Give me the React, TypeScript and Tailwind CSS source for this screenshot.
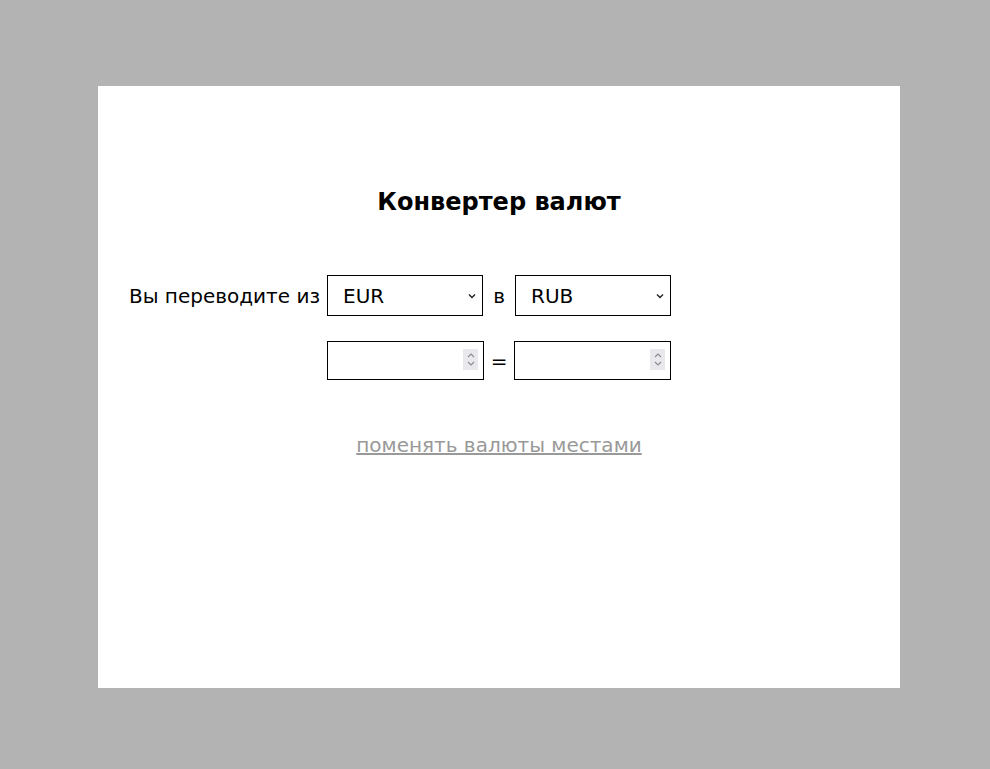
import React, { useState } from 'react';

const currencies = ['EUR', 'RUB', 'USD', 'GBP', 'CNY'];

const Chevron: React.FC = () => (
  <svg
    className="pointer-events-none absolute right-[7px] top-[18px]"
    width="8"
    height="6"
    viewBox="0 0 8 6"
    fill="none"
  >
    <path d="M1 1.5 L4 4.5 L7 1.5" stroke="#222" strokeWidth="1.4" />
  </svg>
);

const Spinner: React.FC = () => (
  <div className="pointer-events-none absolute right-[6px] top-[8px] flex h-[21px] w-[15px] flex-col items-center justify-center gap-[3px] bg-[#e9e9ed]">
    <svg width="8" height="5" viewBox="0 0 8 5" fill="none">
      <path d="M1 4 L4 1 L7 4" stroke="#8a8a8a" strokeWidth="1.1" />
    </svg>
    <svg width="8" height="5" viewBox="0 0 8 5" fill="none">
      <path d="M1 1 L4 4 L7 1" stroke="#8a8a8a" strokeWidth="1.1" />
    </svg>
  </div>
);

const CurrencySelect: React.FC<{ value: string; onChange: (v: string) => void; className?: string }> = ({
  value,
  onChange,
  className,
}) => (
  <div className={`relative w-[156px] ${className ?? ''}`}>
    <select
      value={value}
      onChange={(e) => onChange(e.target.value)}
      className="h-[41px] w-full appearance-none border border-black bg-white pl-[15px] text-xl"
    >
      {currencies.map((c) => (
        <option key={c}>{c}</option>
      ))}
    </select>
    <Chevron />
  </div>
);

const NumberField: React.FC = () => (
  <div className="relative w-[157px]">
    <input
      type="number"
      className="h-[39px] w-full border border-black bg-white pl-1 pr-6 text-xl [appearance:textfield] [&::-webkit-inner-spin-button]:appearance-none [&::-webkit-outer-spin-button]:appearance-none"
    />
    <Spinner />
  </div>
);

const App: React.FC = () => {
  const [from, setFrom] = useState('EUR');
  const [to, setTo] = useState('RUB');

  const swap = (e: React.MouseEvent) => {
    e.preventDefault();
    setFrom(to);
    setTo(from);
  };

  return (
    <div className="min-h-screen bg-[#b3b3b3] pt-[86px] pl-[98px] font-['DejaVu_Sans',sans-serif] text-black">
      <div className="flex h-[602px] w-[802px] flex-col bg-white pt-[102px]">
        <h1 className="text-center text-2xl leading-7 font-bold">Конвертер валют</h1>

        {/* form rows */}
        <div className="mt-[59px] ml-[31px] grid grid-cols-[auto_157px_30px_157px] items-center gap-y-[25px] self-start text-xl">
          <span className="pr-[7px]">Вы переводите из</span>
          <CurrencySelect value={from} onChange={setFrom} />
          <span className="text-center">в</span>
          <CurrencySelect value={to} onChange={setTo} className="justify-self-end" />

          <span />
          <NumberField />
          <span className="text-center">=</span>
          <NumberField />
        </div>

        <div className="mt-[51px] text-center text-xl">
          <a href="#" onClick={swap} className="text-[#999999] underline">
            поменять валюты местами
          </a>
        </div>
      </div>
    </div>
  );
};

export default App;
